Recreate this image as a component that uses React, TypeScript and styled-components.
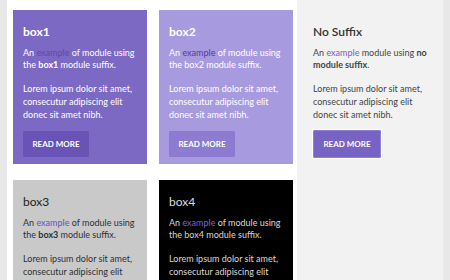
import React from "react";
import styled, { createGlobalStyle, css } from "styled-components";

const Global = createGlobalStyle`
  html, body { margin: 0; padding: 0; background: #e8e8e8; }
  body { font-family: Lato, "Open Sans", sans-serif; overflow: hidden; }
`;

type Variant = "box1" | "box2" | "box3" | "box4" | "plain";

const palette: Record<Variant, { bg: string; text: string; title: string; link: string; btn: string; titleWeight: number; strongWeight: number }> = {
  box1: { bg: "#7b69c4", text: "#ffffff", title: "#ffffff", link: "#5d4aab", btn: "#6953b6", titleWeight: 700, strongWeight: 700 },
  box2: { bg: "#a89ade", text: "#ffffff", title: "#ffffff", link: "#4f3c9f", btn: "#8c7bd1", titleWeight: 700, strongWeight: 400 },
  box3: { bg: "#c9c9c9", text: "#2f2f2f", title: "#222222", link: "#6552bd", btn: "#7763c4", titleWeight: 400, strongWeight: 700 },
  box4: { bg: "#000000", text: "#d8d8d8", title: "#dddddd", link: "#7a63d6", btn: "#7763c4", titleWeight: 400, strongWeight: 400 },
  plain: { bg: "transparent", text: "#444444", title: "#333333", link: "#7561c4", btn: "#7763c4", titleWeight: 600, strongWeight: 700 },
};

const Page = styled.div`
  display: flex;
  margin-left: 7px;
  width: 436px;
  height: 280px;
  background: #ffffff;
`;

const Main = styled.div`
  width: 290px;
  display: grid;
  grid-template-columns: 134px 134px;
  column-gap: 12px;
  row-gap: 16px;
  padding: 10px 0 0 6px;
  box-sizing: border-box;
  align-content: start;
`;

const Sidebar = styled.div`
  flex: 1;
  background: #f2f2f2;
  padding: 10px 0 0 6px;
`;

const Box = styled.div<{ $v: Variant }>`
  background: ${(p) => palette[p.$v].bg};
  color: ${(p) => palette[p.$v].text};
  padding: 14px 10px 7px 10px;
  box-sizing: border-box;
  ${(p) => p.$v !== "plain" && css`height: 154px;`}
`;

const Title = styled.h3<{ $v: Variant }>`
  margin: 0 0 6.5px 0;
  font-size: 12px;
  line-height: 16px;
  font-weight: ${(p) => palette[p.$v].titleWeight};
  color: ${(p) => palette[p.$v].title};
`;

const Para = styled.p`
  margin: 0 0 11px 0;
  font-size: 9px;
  line-height: 12.8px;
  &:last-of-type { margin-bottom: 0; }
`;

const Link = styled.a<{ $v: Variant }>`
  color: ${(p) => palette[p.$v].link};
  text-decoration: none;
`;

const Strong = styled.b<{ $v: Variant }>`
  font-weight: ${(p) => palette[p.$v].strongWeight};
`;

const Button = styled.button<{ $v: Variant }>`
  display: block;
  margin-top: 10px;
  height: 26px;
  width: 66px;
  border: none;
  padding: 0;
  background: ${(p) => palette[p.$v].btn};
  color: #ffffff;
  font-family: Lato, sans-serif;
  font-weight: 700;
  font-size: 8px;
  text-transform: uppercase;
  border-radius: 1px;
  ${(p) =>
    p.$v === "plain" &&
    css`
      margin-top: 9px;
      width: 68px;
      height: 28px;
      border: 1px solid #8f7ed2;
      box-shadow: 0 0 0 1px #ffffff;
    `}
`;

function Module({ v, name }: { v: Variant; name: string }) {
  return (
    <Box $v={v}>
      <Title $v={v}>{name}</Title>
      <Para>
        An <Link $v={v}>example</Link> of module using the <Strong $v={v}>{name}</Strong> module suffix.
      </Para>
      <Para>Lorem ipsum dolor sit amet, consecutur adipiscing elit donec sit amet nibh.</Para>
      <Button $v={v}>Read More</Button>
    </Box>
  );
}

export default function App() {
  return (
    <>
      <Global />
      <Page>
        <Main>
          <Module v="box1" name="box1" />
          <Module v="box2" name="box2" />
          <Module v="box3" name="box3" />
          <Module v="box4" name="box4" />
        </Main>
        <Sidebar>
          <Box $v="plain">
            <Title $v="plain">No Suffix</Title>
            <Para>
              An <Link $v="plain">example</Link> module using <Strong $v="plain">no module suffix</Strong>.
            </Para>
            <Para>Lorem ipsum dolor sit amet, consecutur adipiscing elit donec sit amet nibh.</Para>
            <Button $v="plain">Read More</Button>
          </Box>
        </Sidebar>
      </Page>
    </>
  );
}
